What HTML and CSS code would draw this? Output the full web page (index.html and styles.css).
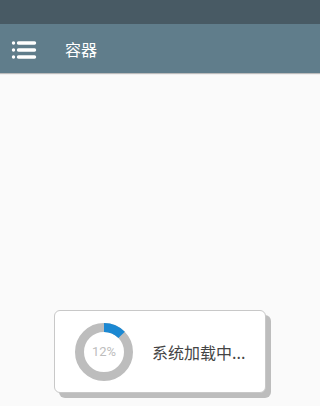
FILE: index.html
```html
<!DOCTYPE html>
<html>
<head>
<meta charset="utf-8">
<link rel="stylesheet" href="styles.css">
</head>
<body>
<div class="app">
  <div class="statusbar"></div>
  <div class="toolbar">
    <svg class="menu" width="26" height="20" viewBox="0 0 26 20">
      <g fill="#fff">
        <circle cx="2.5" cy="3" r="1.7"/>
        <circle cx="2.5" cy="10" r="1.7"/>
        <circle cx="2.5" cy="17" r="1.7"/>
      </g>
      <g stroke="#fff" stroke-width="3.4" stroke-linecap="round">
        <line x1="7.5" y1="3" x2="23.5" y2="3"/>
        <line x1="7.5" y1="10" x2="23.5" y2="10"/>
        <line x1="7.5" y1="17" x2="23.5" y2="17"/>
      </g>
    </svg>
    <span class="title">容器</span>
  </div>
  <div class="content"></div>
  <div class="dialog">
    <div class="ring">
      <svg width="60" height="60" viewBox="0 0 60 60">
        <circle cx="30" cy="30" r="24.5" fill="none" stroke="#bdbdbd" stroke-width="9"/>
        <circle cx="30" cy="30" r="24.5" fill="none" stroke="#1b88d2" stroke-width="9"
          stroke-dasharray="19.5 200" transform="rotate(-90 30 30)"/>
      </svg>
      <span class="pct">12%</span>
    </div>
    <span class="msg">系统加载中...</span>
  </div>
</div>
</body>
</html>
```
FILE: styles.css
```css
html, body {
  margin: 0;
  padding: 0;
  background: #fafafa;
}
.app {
  position: relative;
  width: 320px;
  height: 406px;
  overflow: hidden;
  font-family: "Noto Sans CJK SC", Roboto, sans-serif;
}
.statusbar {
  height: 24px;
  background: #485a64;
}
.toolbar {
  height: 49px;
  background: #607d8b;
  display: flex;
  align-items: center;
  box-shadow: 0 1px 1px rgba(0,0,0,0.25);
}
.menu {
  margin-left: 11px;
  margin-top: 2px;
}
.title {
  margin-left: 28px;
  color: #fff;
  font-size: 16px;
  line-height: 20px;
}
.content {
  height: 333px;
}
.dialog {
  position: absolute;
  left: 54px;
  top: 310px;
  width: 210px;
  height: 81px;
  background: #fff;
  border: 1px solid #c8c8c8;
  border-radius: 6px;
  box-shadow: 5px 5px 0 0 #bdbdbd;
  display: flex;
  align-items: center;
}
.ring {
  position: relative;
  width: 60px;
  height: 60px;
  margin-left: 19px;
}
.ring svg {
  display: block;
}
.pct {
  position: absolute;
  left: 0;
  top: 0;
  width: 60px;
  line-height: 60px;
  text-align: center;
  font-family: Roboto, sans-serif;
  font-size: 13px;
  color: #bdbdbd;
}
.msg {
  margin-left: 18px;
  font-size: 16px;
  color: #444;
}
```
